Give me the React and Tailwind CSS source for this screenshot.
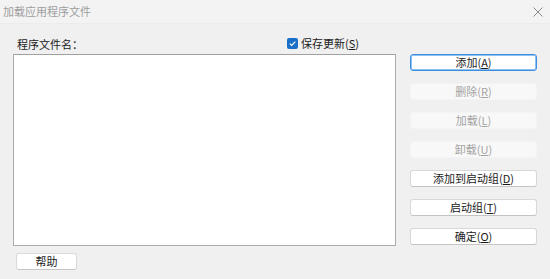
import React from "react";

const font = { fontFamily: '"Noto Sans CJK SC", "Microsoft YaHei", sans-serif' };

function Btn({ label, k, disabled, primary }) {
  const base =
    "h-[17px] w-[127px] rounded-[3px] flex items-center justify-center text-[11px] leading-none";
  const cls = disabled
    ? "bg-[#f8f8f8] border border-[#f4f4f4] text-[#a3a3a3]"
    : primary
    ? "bg-white border border-[#3c8ee0] text-[#1b1b1b] shadow-[inset_0_0_0_1px_#8ec0f0]"
    : "bg-white border border-[#d8d8d8] border-b-[#c4c4c4] text-[#1b1b1b]";
  return (
    <div className={`${base} ${cls}`}>
      <span>
        {label}(<span className="underline underline-offset-1">{k}</span>)
      </span>
    </div>
  );
}

export default function App() {
  return (
    <div className="w-[550px] h-[279px] bg-[#f0f0f0] flex flex-col overflow-hidden" style={font}>
      <div className="h-[24px] bg-[#f3f3f3] flex items-center justify-between pl-[3px] pr-[6px] border-b border-[#ececec]">
        <span className="text-[11px] text-[#9e9e9e] leading-none">加载应用程序文件</span>
        <svg width="12" height="12" viewBox="0 0 12 12" className="mt-[1px]">
          <path d="M1.5 1.5 L10.5 10.5 M10.5 1.5 L1.5 10.5" stroke="#8a8a8a" strokeWidth="1" />
        </svg>
      </div>
      <div className="flex pl-[13px] pt-[11px]">
        <div className="flex flex-col w-[383px]">
          <div className="h-[19px] flex items-center relative">
            <span className="text-[11px] text-[#1b1b1b] ml-[4px] leading-none">程序文件名：</span>
            <div className="absolute left-[274px] top-[3px] flex items-center">
              <div className="w-[11px] h-[11px] rounded-[2px] bg-[#1a6fc8] flex items-center justify-center">
                <svg width="9" height="9" viewBox="0 0 9 9">
                  <path d="M1.8 4.6 L3.7 6.4 L7.3 2.6" stroke="white" strokeWidth="1.2" fill="none" />
                </svg>
              </div>
              <span className="text-[11px] text-[#1b1b1b] ml-[3px] leading-none">
                保存更新(<span className="underline underline-offset-1">S</span>)
              </span>
            </div>
          </div>
          <div className="h-[192px] bg-white border border-[#ababab] border-t-[#a0a0a0]"></div>
          <div className="mt-[7px] ml-[3px] h-[17px] w-[61px] rounded-[3px] bg-white border border-[#dadada] border-b-[#c6c6c6] flex items-center justify-center text-[11px] text-[#1b1b1b] leading-none">
            帮助
          </div>
        </div>
        <div className="ml-[14px] pt-[19px] flex flex-col gap-[12px]">
          <Btn label="添加" k="A" primary />
          <Btn label="删除" k="R" disabled />
          <Btn label="加载" k="L" disabled />
          <Btn label="卸载" k="U" disabled />
          <Btn label="添加到启动组" k="D" />
          <Btn label="启动组" k="T" />
          <Btn label="确定" k="O" />
        </div>
      </div>
    </div>
  );
}
